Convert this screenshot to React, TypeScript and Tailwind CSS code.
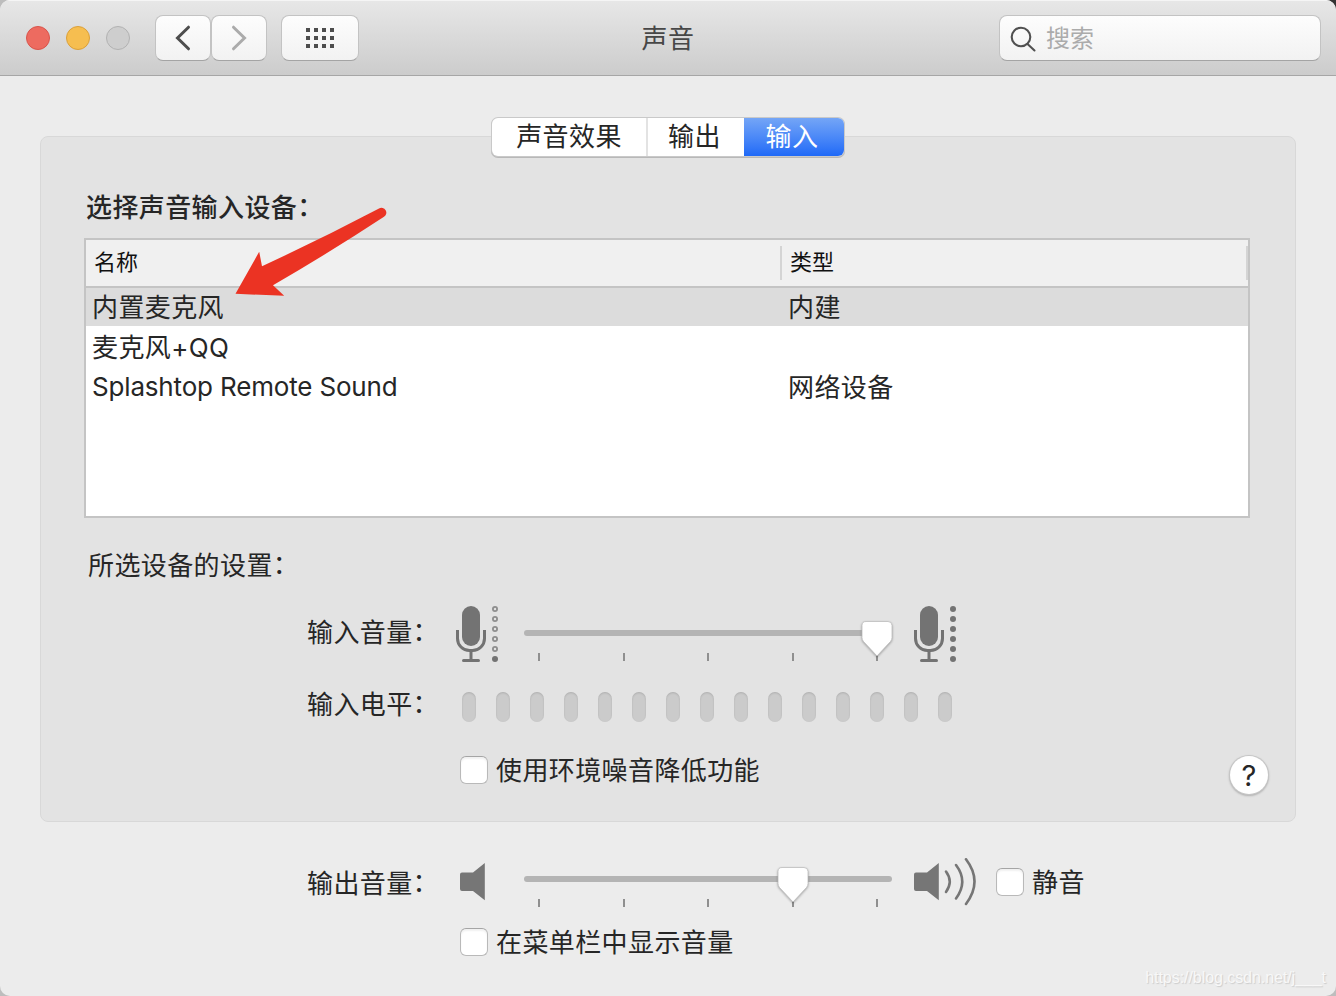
import type { ReactNode } from "react";

const devices = [
    { name: "内置麦克风", type: "内建", selected: true },
    { name: "麦克风+QQ", type: "" },
    { name: "Splashtop Remote Sound", type: "网络设备", latin: true },
];

function ToolbarButton({ className, children }: { className: string; children: ReactNode }) {
    return (
        <button
            className={`h-[46px] flex items-center justify-center rounded-[8px] border border-[#c3c3c3] border-b-[#a4a4a4] bg-linear-to-b from-[#fdfdfd] to-[#f2f2f2] ${className}`}
        >
            {children}
        </button>
    );
}

// Full-width colon, nudged to sit level with the ideographs
function Colon() {
    return <span className="inline-block -translate-y-px">：</span>;
}

function Checkbox({ label }: { label: string }) {
    return (
        <label className="flex items-center h-7 gap-2">
            <span className="w-7 h-7 rounded-[6px] border border-[#b9b9b9] border-t-[#a5a5a5] bg-white shadow-[inset_0_2px_2px_rgba(0,0,0,0.06)]" />
            <span className="leading-7 pt-[2px]">{label}</span>
        </label>
    );
}

function MicIcon({ full }: { full?: boolean }) {
    return (
        <svg width="42" height="56" viewBox="0 0 42 56" fill="none" className="shrink-0">
            <rect x="6" y="0" width="18" height="40" rx="9" fill="#737373" />
            <path d="M1.5 24v8.5a12 12 0 0 0 12 12h3a12 12 0 0 0 12-12V24" stroke="#737373" strokeWidth="3" />
            <path d="M15 45v9" stroke="#737373" strokeWidth="3" />
            <rect x="6" y="53" width="18" height="3" rx="1.5" fill="#737373" />
            {[3, 13, 23, 33, 43, 53].map((y) =>
                full || y === 53 ? (
                    <circle key={y} cx="39" cy={y} r="3" fill="#737373" />
                ) : (
                    <circle key={y} cx="39" cy={y} r="2.1" stroke="#8e8e8e" strokeWidth="1.8" />
                )
            )}
        </svg>
    );
}

function SpeakerIcon({ loud }: { loud?: boolean }) {
    return (
        <svg width="64" height="48" viewBox="0 0 64 48" fill="none" className="shrink-0">
            <path d="M2 14.5h11L24.8 5v37.3L13 33H2a2 2 0 0 1-2-2V16.5a2 2 0 0 1 2-2z" fill="#767676" />
            {loud && (
                <g stroke="#767676" strokeWidth="2.6" strokeLinecap="round">
                    <path d="M32 13.5Q39.5 23.5 32 34" />
                    <path d="M42 7Q54.5 23.5 42 40.5" />
                    <path d="M52 1.3Q69 23.5 52 46" />
                </g>
            )}
        </svg>
    );
}

function Slider({ value }: { value: number }) {
    return (
        <div className="relative w-[368px] h-[40px] pt-[9px]">
            <div className="h-[6px] rounded-full bg-[#b4b4b4]" />
            <div className="mt-[17px] ml-[14px] w-[340px] flex justify-between">
                {[0, 1, 2, 3, 4].map((t) => (
                    <span key={t} className="w-[2px] h-[8px] bg-[#8f8f8f]" />
                ))}
            </div>
            <svg
                width="36"
                height="39"
                viewBox="0 0 36 39"
                className="absolute top-[-1px] drop-shadow-[0_1px_1px_rgba(0,0,0,0.3)]"
                style={{ left: value * 338 - 3 }}
            >
                <path
                    d="M7 1.5h22a4 4 0 0 1 4 4V17.5q0 2-1.3 3.8L18 36 4.3 21.3Q3 19.5 3 17.5V5.5a4 4 0 0 1 4-4z"
                    fill="#fff"
                    stroke="#bdbdbd"
                    strokeWidth="0.8"
                />
            </svg>
        </div>
    );
}

export default function App() {
    return (
        <div className="w-[1336px] h-[996px] bg-[linear-gradient(to_bottom_left,#333_1%,#bdbdbd_2%)] overflow-hidden">
            <div className="relative h-full flex flex-col rounded-[10px] overflow-hidden bg-[#ececec] text-[#262626] text-[26px] tracking-[0.4px] font-[Inter,'Noto_Sans_CJK_SC',sans-serif]">
                {/* Title bar */}
                <header className="h-[76px] shrink-0 grid grid-cols-[1fr_auto_1fr] items-center border-b border-b-[#a6a6a6] border-t border-t-[#f5f5f5] bg-linear-to-b from-[#e7e7e7] to-[#cccccc]">
                    <div className="flex items-center pl-[26px]">
                        <div className="flex gap-4">
                            <span className="w-6 h-6 rounded-full bg-[#ed6b60] border border-[#d9544b]" />
                            <span className="w-6 h-6 rounded-full bg-[#f6be50] border border-[#dba03a]" />
                            <span className="w-6 h-6 rounded-full bg-[#cecece] border border-[#b2b2b2]" />
                        </div>
                        <ToolbarButton className="w-[56px] ml-[25px]">
                            <svg width="16" height="26" viewBox="0 0 16 26" fill="none" stroke="#4d4d4d" strokeWidth="3" strokeLinecap="round">
                                <path d="M13.5 2.2L2.5 13l11 10.8" />
                            </svg>
                        </ToolbarButton>
                        <ToolbarButton className="w-[56px]">
                            <svg width="16" height="26" viewBox="0 0 16 26" fill="none" stroke="#ababab" strokeWidth="3" strokeLinecap="round">
                                <path d="M2.5 2.2l11 10.8-11 10.8" />
                            </svg>
                        </ToolbarButton>
                        <ToolbarButton className="w-[78px] ml-[14px]">
                            <span className="grid grid-cols-4 gap-[4px]">
                                {Array.from({ length: 12 }, (_, i) => (
                                    <span key={i} className="w-1 h-1 bg-[#4d4d4d]" />
                                ))}
                            </span>
                        </ToolbarButton>
                    </div>
                    <h1 className="text-[#474747] leading-[40px] pt-[2px]">声音</h1>
                    <div className="flex justify-end pr-[15px]">
                        <div className="w-[322px] h-[46px] flex items-center gap-[10px] pl-[10px] rounded-[8px] border border-[#c3c3c3] border-b-[#a4a4a4] bg-linear-to-b from-[#fdfdfd] to-[#f2f2f2]">
                            <svg width="26" height="28" viewBox="0 0 26 28" fill="none" stroke="#505050" strokeWidth="2.1" strokeLinecap="round">
                                <circle cx="11" cy="13" r="9.3" />
                                <path d="M17.5 20l7 6.5" />
                            </svg>
                            <span className="text-[24px] tracking-normal text-[#ababab] pt-px">搜索</span>
                        </div>
                    </div>
                </header>

                <main className="flex-1 flex flex-col px-10 pt-[42px]">
                    {/* Tabs straddle the top edge of the panel */}
                    <nav className="relative z-10 self-center flex w-[352px] h-[38px] leading-[38px] rounded-[6px] overflow-hidden bg-white shadow-[0_0_0_1px_#c9c9c9,0_1px_0_1px_#b8b8b8]">
                        <span className="w-[154px] text-center border-r-2 border-[#e3e3e3] box-content">声音效果</span>
                        <span className="w-[96px] text-center pr-[3px]">输出</span>
                        <span className="flex-1 text-center pr-[4px] text-white bg-linear-to-b from-[#74a5f6] to-[#1f69f7]">输入</span>
                    </nav>

                    <section className="-mt-[20px] h-[686px] rounded-[8px] border border-[#d8d8d8] bg-[#e3e3e3] px-[43px]">
                        <h2 className="mt-[50px] h-10 leading-[41px] ml-[2px] font-medium">选择声音输入设备<Colon /></h2>

                        <div className="mt-[11px] w-[1166px] h-[280px] border-2 border-[#c4c4c4] bg-white">
                            <div className="h-[48px] flex items-center border-b-2 border-[#c4c4c4] bg-[#f0f0f0] text-[22px] tracking-normal text-[#111]">
                                <span className="w-[694px] pl-[8px] leading-[32px] pb-[2px]">名称</span>
                                <span className="flex-1 h-[34px] leading-[32px] pl-[8px] border-x-2 border-[#d4d4d4]">类型</span>
                            </div>
                            <ul className="flex flex-col gap-[2px]">
                                {devices.map((d) => (
                                    <li
                                        key={d.name}
                                        className={`h-[38px] leading-[39px] flex pl-[6px] ${d.selected ? "bg-[#dcdcdc]" : ""}`}
                                    >
                                        <span className={`w-[696px] ${d.latin ? "tracking-[-0.17px] leading-[38px]" : ""}`}>{d.name}</span>
                                        <span>{d.type}</span>
                                    </li>
                                ))}
                            </ul>
                        </div>

                        <p className="mt-[27px] ml-[4px] h-10 leading-[41px]">所选设备的设置<Colon /></p>

                        <div className="mt-[21px] flex h-[56px] items-center">
                            <span className="w-[372px] pl-[223px] pb-[3px] whitespace-nowrap">输入音量<Colon /></span>
                            <MicIcon />
                            <div className="ml-[26px] mr-[22px] mt-[14px]">
                                <Slider value={1} />
                            </div>
                            <MicIcon full />
                        </div>

                        <div className="mt-[30px] flex h-[30px] items-center">
                            <span className="w-[378px] pl-[223px] pb-[5px] whitespace-nowrap">输入电平<Colon /></span>
                            <div className="flex gap-5">
                                {Array.from({ length: 15 }, (_, i) => (
                                    <span key={i} className="w-[14px] h-[30px] rounded-full bg-[#cbcbcb] shadow-[inset_0_1px_2px_rgba(0,0,0,0.14)]" />
                                ))}
                            </div>
                        </div>

                        <div className="mt-[33px] flex items-start justify-between pl-[376px]">
                            <div className="mt-[1px]">
                                <Checkbox label="使用环境噪音降低功能" />
                            </div>
                            <button className="w-[38px] h-[38px] -mr-[16px] mt-[1px] rounded-full bg-white shadow-[0_0_0_1px_#c6c6c6,0_1px_2px_1px_#b0b0b0] text-[29px] leading-[40px] tracking-normal">
                                ?
                            </button>
                        </div>
                    </section>

                    <div className="mt-[36px] flex h-12 items-center">
                        <span className="w-[420px] pl-[267px] pt-[2px] whitespace-nowrap">输出音量<Colon /></span>
                        <SpeakerIcon />
                        <div className="mt-[10px] mr-[22px]">
                            <Slider value={0.751} />
                        </div>
                        <SpeakerIcon loud />
                        <div className="ml-[18px]">
                            <Checkbox label="静音" />
                        </div>
                    </div>
                    <div className="mt-[22px] pl-[420px]">
                        <Checkbox label="在菜单栏中显示音量" />
                    </div>
                </main>

                {/* Pointer to the selected device */}
                <svg width="160" height="100" viewBox="230 200 160 100" className="absolute left-[230px] top-[200px] z-20">
                    <path
                        d="M235.5 293.8L259.2 251.7 262 266.2Q322 238.5 379 208.5A4.7 4.7 0 0 1 384 216.8Q332 251 273 285.3L284.2 295.8z"
                        fill="#eb3323"
                    />
                </svg>

                <span className="absolute right-[10px] bottom-[8px] text-[16px] leading-[20px] tracking-[-0.06px] text-[#f8f8f8] [text-shadow:1px_1px_1px_#cccccc] font-['Liberation_Sans',sans-serif]">
                    https://blog.csdn.net/j___t
                </span>
            </div>
        </div>
    );
}
